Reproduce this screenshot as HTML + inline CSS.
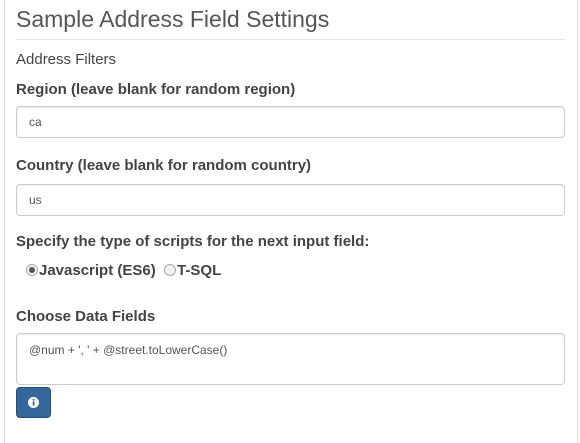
<!DOCTYPE html>
<html style="overflow:hidden;height:443px"><head><style>
body{margin:0;width:580px;height:443px;background:#fff;font-family:"Liberation Sans",sans-serif;color:#333;position:relative;overflow:hidden}
.frame{position:absolute;left:4px;top:-2px;width:572px;height:448px;border:1px solid #ddd}
.a{position:absolute;white-space:nowrap}
h1{position:absolute;left:16px;top:6px;margin:0;font-weight:normal;font-size:23px;color:#555}
.hr{position:absolute;left:16px;top:39px;width:549px;height:1px;background:#e5e5e5}
.lbl{font-weight:bold;font-size:15px;color:#444}
.inp{position:absolute;left:16px;width:549px;border:1px solid #ccc;border-radius:4px;box-shadow:inset 0 1px 1px rgba(0,0,0,.08);font-size:12px;color:#555;box-sizing:border-box;padding-left:12px}
.btn{position:absolute;left:16px;top:387px;width:35px;height:31px;background:#34679a;border:1px solid #284f78;border-radius:4px;box-sizing:border-box}
.rad{display:inline-block;width:12px;height:12px;border:1px solid #aaa;border-radius:50%;box-sizing:border-box;vertical-align:-1px;background:#f2f2f2;position:relative;margin-right:1px}
</style></head><body>
<div class="frame"></div>
<h1>Sample Address Field Settings</h1>
<div class="hr"></div>
<div class="a" style="left:16px;top:51px;font-size:15px;color:#444">Address Filters</div>
<div class="a lbl" style="left:16px;top:81px">Region (leave blank for random region)</div>
<div class="inp" style="top:106px;height:32px;line-height:30px">ca</div>
<div class="a lbl" style="left:16px;top:157px">Country (leave blank for random country)</div>
<div class="inp" style="top:184px;height:32px;line-height:30px">us</div>
<div class="a lbl" style="left:16px;top:233px">Specify the type of scripts for the next input field:</div>
<div class="a lbl" style="left:26px;top:262px"><span class="rad"><span style="position:absolute;left:2px;top:2px;width:6px;height:6px;border-radius:50%;background:#555"></span></span>Javascript (ES6)&nbsp; <span class="rad"></span>T-SQL</div>
<div class="a lbl" style="left:16px;top:308px">Choose Data Fields</div>
<div class="inp" style="top:333px;height:52px;padding-top:9px;font-size:12px">@num + ', ' + @street.toLowerCase()</div>
<div class="btn"><svg width="33" height="29" viewBox="0 0 33 29"><circle cx="16.5" cy="14.5" r="5.5" fill="#fff"/><rect x="15.7" y="13.5" width="1.8" height="4" fill="#34679a"/><circle cx="16.6" cy="11.8" r="1" fill="#34679a"/></svg></div>
</body></html>
